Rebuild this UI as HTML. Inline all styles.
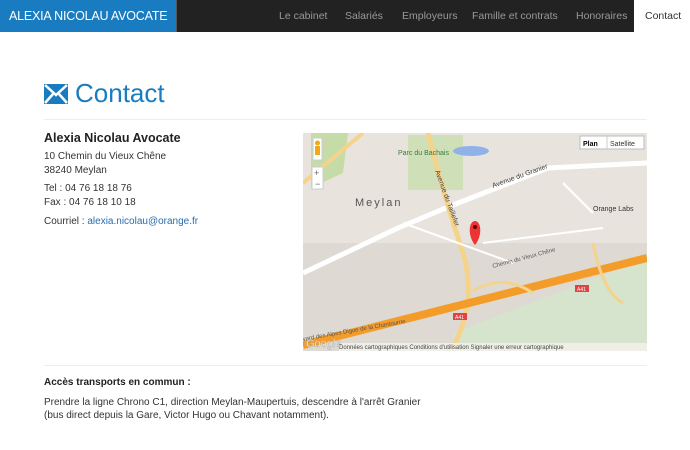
<!DOCTYPE html>
<html><head><meta charset="utf-8"><style>
*{margin:0;padding:0;box-sizing:border-box}
body{width:690px;height:450px;background:#fff;font-family:"Liberation Sans",sans-serif;color:#333;position:relative;overflow:hidden}
.nav{position:absolute;left:0;top:0;width:690px;height:32px;background:#222}
.brand{position:absolute;left:0;top:0;width:177px;height:32px;background:#1a7cc0;color:#fff;font-size:12.5px;line-height:32px;padding-left:9px;border-right:1px solid #555;white-space:nowrap;letter-spacing:-0.2px}
.nav a{position:absolute;top:0;color:#999;font-size:10.5px;line-height:32px;text-decoration:none;white-space:nowrap}
.act{position:absolute;left:634px;top:0;width:56px;height:32px;background:#fff}
h1{position:absolute;left:44px;top:78px;font-size:26px;font-weight:normal;color:#1a7cc0;display:flex;align-items:center}
.hr{position:absolute;left:44px;width:603px;height:1px;background:#eee}
.t{position:absolute;font-size:10px;line-height:14px;white-space:nowrap}
a.m{color:#2a6cae;text-decoration:none}
</style></head><body>
<div class="nav"><div class="brand">ALEXIA NICOLAU AVOCATE</div>
<a style="left:279px">Le cabinet</a><a style="left:345px">Salariés</a><a style="left:402px">Employeurs</a><a style="left:472px">Famille et contrats</a><a style="left:576px">Honoraires</a><div class="act"></div><a style="left:645px;color:#333">Contact</a></div>
<h1><svg width="24" height="20" viewBox="0 0 24 20" style="margin-right:7px"><rect x="0" y="0" width="24" height="20" fill="#1a7cc0"/><path d="M1 1 L12 11 L23 1" stroke="#fff" stroke-width="2.5" fill="none"/><path d="M1 19 L9 10 M23 19 L15 10" stroke="#fff" stroke-width="2.5"/></svg>Contact</h1>
<div class="hr" style="top:119px"></div>
<div class="t" style="left:44px;top:131px;font-size:12.5px;font-weight:bold;color:#222">Alexia Nicolau Avocate</div>
<div class="t" style="left:44px;top:150px">10 Chemin du Vieux Chêne<br>38240 Meylan</div>
<div class="t" style="left:44px;top:182px">Tel : 04 76 18 18 76<br>Fax : 04 76 18 10 18</div>
<div class="t" style="left:44px;top:215px">Courriel : <a class="m">alexia.nicolau@orange.fr</a></div>
<svg style="position:absolute;left:303px;top:133px" width="344" height="218" viewBox="0 0 344 218" font-family="Liberation Sans,sans-serif">
<rect width="344" height="218" fill="#e8e4dd"/>
<rect x="0" y="110" width="344" height="108" fill="#dedad3"/>
<polygon points="8,0 45,0 40,40 8,55" fill="#c6dca8"/>
<rect x="105" y="2" width="55" height="55" fill="#cfe0b8"/>
<polygon points="150,200 344,125 344,218 150,218" fill="#d6e3cd"/>
<ellipse cx="168" cy="18" rx="18" ry="5" fill="#8fb3e8"/>
<path d="M0 140 L95 95 L150 72 L245 35 L344 30" stroke="#fff" stroke-width="5" fill="none"/>
<path d="M125 0 Q140 60 160 120 Q175 170 148 218" stroke="#f5d38a" stroke-width="5" fill="none"/>
<path d="M0 50 L60 0" stroke="#f5d38a" stroke-width="4"/>
<path d="M0 212 L344 125" stroke="#f39c2a" stroke-width="8"/>
<path d="M170 158 Q200 140 230 160 M290 110 Q300 160 320 170" stroke="#f5d38a" stroke-width="3" fill="none"/>
<path d="M100 90 L210 130 M180 110 L300 95 M260 50 L290 80" stroke="#fff" stroke-width="2" fill="none"/>
<text x="52" y="73" font-size="11" fill="#555" letter-spacing="2">Meylan</text>
<text x="95" y="22" font-size="7" fill="#3a7a3a">Parc du Bachais</text>
<text x="190" y="55" font-size="7" fill="#444" transform="rotate(-20 190 55)">Avenue du Granier</text>
<text x="132" y="38" font-size="7" fill="#444" transform="rotate(70 132 38)">Avenue du Taillefer</text>
<text x="190" y="135" font-size="6" fill="#555" transform="rotate(-15 190 135)">Chemin du Vieux Chêne</text>
<text x="290" y="78" font-size="7" fill="#333">Orange Labs</text>
<text x="0" y="208" font-size="6" fill="#555" transform="rotate(-10 0 208)">vard des Alpes  Digue de la Chantourne</text>
<rect x="272" y="152" width="14" height="7" fill="#d44"/><text x="274" y="158" font-size="5" fill="#fff">A41</text>
<rect x="150" y="180" width="14" height="7" fill="#d44"/><text x="152" y="186" font-size="5" fill="#fff">A41</text>
<path d="M172 112 C164 102 166 88 172 88 C178 88 180 102 172 112Z" fill="#e33"/><circle cx="172" cy="94" r="2" fill="#600"/>
<rect x="10" y="5" width="9" height="22" fill="#fff" stroke="#ccc"/><circle cx="14.5" cy="10" r="2.5" fill="#f3a818"/><rect x="12" y="13" width="5" height="9" fill="#f3a818"/>
<rect x="9" y="34" width="11" height="22" fill="#fff" stroke="#ccc"/><text x="11" y="43" font-size="9" fill="#666">+</text><text x="12" y="54" font-size="9" fill="#666">−</text>
<rect x="277" y="3" width="64" height="13" fill="#fff" stroke="#bbb"/><line x1="304" y1="3" x2="304" y2="16" stroke="#ccc"/>
<text x="280" y="13" font-size="7" font-weight="bold" fill="#000">Plan</text><text x="307" y="13" font-size="7" fill="#333">Satellite</text>
<rect x="36" y="210" width="308" height="8" fill="#f3f1ec" opacity=".85"/>
<text x="36" y="216" font-size="6" fill="#444">Données cartographiques    Conditions d'utilisation    Signaler une erreur cartographique</text>
<text x="3" y="214" font-size="11" fill="#fff" stroke="#aaa" stroke-width=".4">Google</text>
</svg>
<div class="hr" style="top:365px"></div>
<div class="t" style="left:44px;top:376px;font-weight:bold;color:#222">Accès transports en commun :</div>
<div class="t" style="left:44px;top:396px;line-height:13px">Prendre la ligne Chrono C1, direction Meylan-Maupertuis, descendre à l'arrêt Granier<br>(bus direct depuis la Gare, Victor Hugo ou Chavant notamment).</div>
</body></html>
